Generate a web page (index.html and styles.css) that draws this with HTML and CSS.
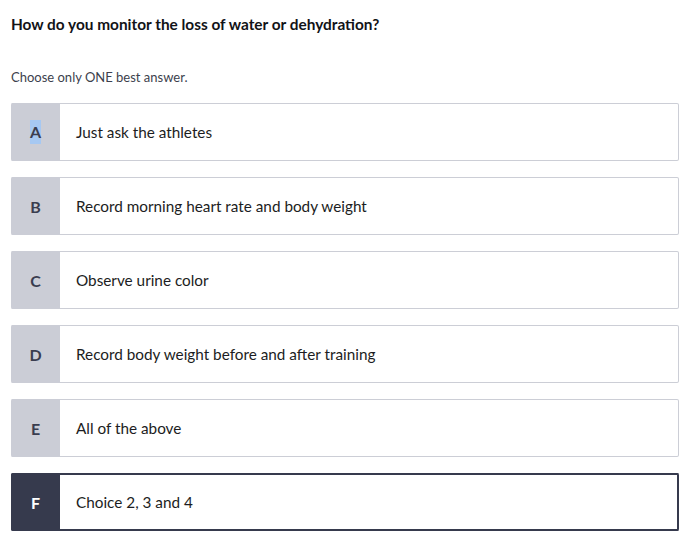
FILE: index.html
```html
<!DOCTYPE html>
<html>
<head>
<meta charset="utf-8">
<link rel="stylesheet" href="styles.css">
</head>
<body>
<div class="quiz">
  <h1 class="question">How do you monitor the loss of water or dehydration?</h1>
  <p class="hint">Choose only ONE best answer.</p>
  <ul class="options">
    <li class="option"><span class="letter"><span class="sel">A</span></span><span class="text">Just ask the athletes</span></li>
    <li class="option"><span class="letter">B</span><span class="text">Record morning heart rate and body weight</span></li>
    <li class="option"><span class="letter">C</span><span class="text">Observe urine color</span></li>
    <li class="option"><span class="letter">D</span><span class="text">Record body weight before and after training</span></li>
    <li class="option"><span class="letter">E</span><span class="text">All of the above</span></li>
    <li class="option selected"><span class="letter">F</span><span class="text">Choice 2, 3 and 4</span></li>
  </ul>
</div>
</body>
</html>
```
FILE: styles.css
```css
html, body {
  margin: 0;
  padding: 0;
  background: #ffffff;
}
body {
  font-family: Lato, "Open Sans", sans-serif;
  color: #1c1d22;
}
.quiz {
  padding: 14px 16px 0 11px;
}
.question {
  margin: 0;
  font-size: 15.4px;
  font-weight: 700;
  line-height: 20px;
  color: #121317;
}
.hint {
  margin: 33px 0 0;
  font-size: 13px;
  line-height: 20px;
  color: #3c3f4d;
}
.options {
  list-style: none;
  margin: 16px 0 0;
  padding: 0;
  display: flex;
  flex-direction: column;
  gap: 16px;
}
.option {
  display: flex;
  align-items: stretch;
  height: 58px;
  box-sizing: border-box;
  border: 1px solid #ccced6;
  border-left: none;
  border-radius: 2px;
  background: #fff;
}
.letter {
  width: 49px;
  flex: none;
  display: flex;
  align-items: center;
  justify-content: center;
  background: #cbcdd6;
  color: #3a3d4f;
  font-weight: 700;
  font-size: 16px;
  margin: -1px 0;
  border-radius: 2px 0 0 2px;
}
.sel {
  display: inline-block;
  line-height: 24px;
  background: #a6c8f2;
}
.text {
  display: flex;
  align-items: center;
  padding-left: 16px;
  font-size: 15.3px;
  color: #1c1d22;
}
.option.selected {
  border: 2px solid #363a4d;
  border-left: none;
}
.option.selected .letter {
  background: #363a4d;
  color: #ffffff;
  margin: -2px 0;
}
```
